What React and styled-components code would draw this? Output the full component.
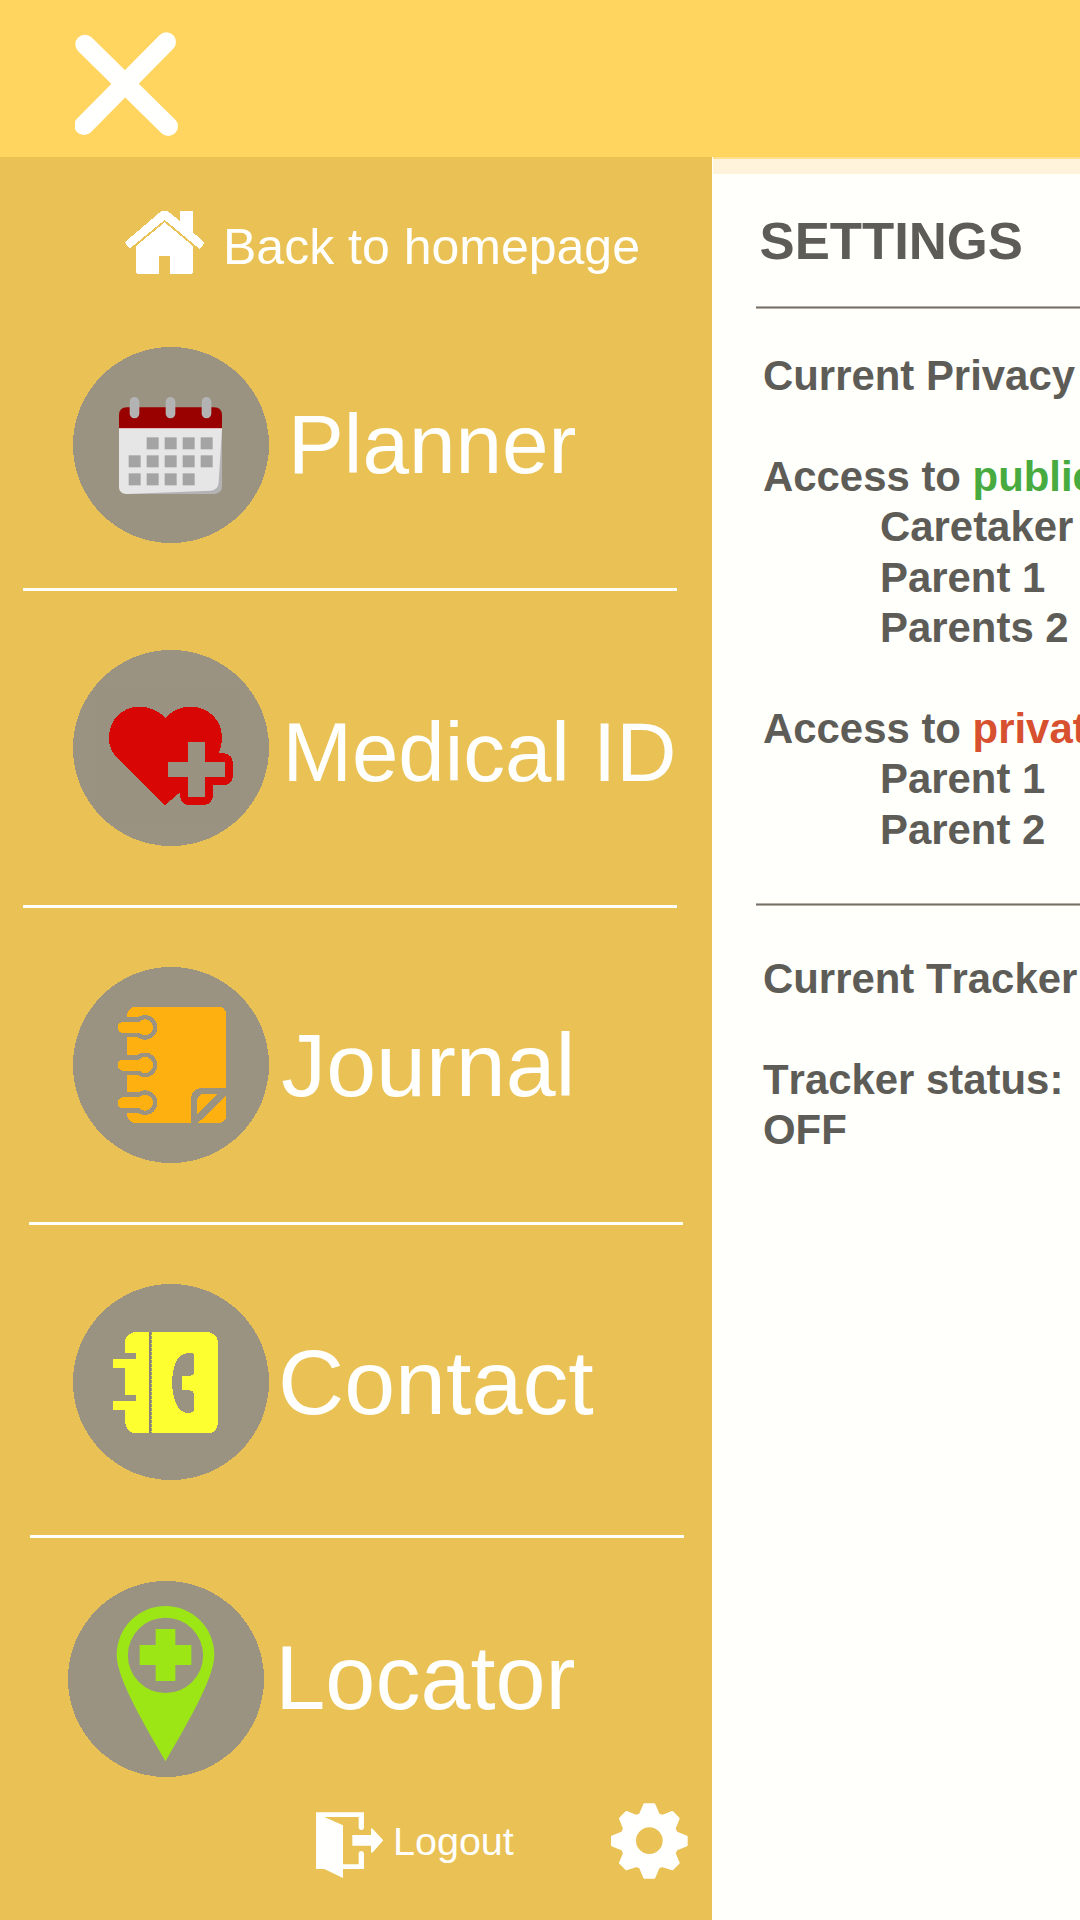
import React from "react";
import styled, { createGlobalStyle } from "styled-components";

const Global = createGlobalStyle`
  * { box-sizing: border-box; }
  body {
    margin: 0;
    background: #fffffc;
    font-family: "Liberation Sans", Arial, sans-serif;
    font-kerning: none;
  }
  h1, p, ul { margin: 0; padding: 0; font-weight: inherit; }
  button, a { all: unset; cursor: pointer; }
  svg { display: block; flex: none; }
`;

const Screen = styled.div`
  width: 1080px;
  height: 1920px;
  overflow: hidden;
  display: flex;
  flex-direction: column;
`;

const TopBar = styled.header`
  flex: none;
  height: 157px;
  padding: 32px 0 0 75px;
  background: #ffd45f;
`;

const CloseButton = styled.button`
  display: block;
  width: 104px;
  height: 105px;
`;

const Body = styled.div`
  flex: 1;
  display: flex;
  min-height: 0;
`;

const Sidebar = styled.nav`
  flex: none;
  width: 712px;
  padding-top: 53px;
  display: flex;
  flex-direction: column;
  background: #e9c154;
  color: #fffffd;
`;

const HomeLink = styled.a`
  display: flex;
  align-items: flex-start;
  height: 64px;
  padding-left: 125px;
  margin-bottom: 73px;
`;

const HomeLabel = styled.span`
  margin: 7px 0 0 19px;
  font-size: 50px;
  line-height: 60px;
  white-space: nowrap;
`;

const MenuItem = styled.a`
  display: flex;
  align-items: flex-start;
  height: 196px;
  padding-left: ${(p) => p.$left}px;
`;

const MenuLabel = styled.span`
  margin: ${(p) => p.$top}px 0 0 ${(p) => p.$gap}px;
  font-size: ${(p) => p.$size}px;
  line-height: 100px;
  white-space: nowrap;
`;

const Divider = styled.div`
  flex: none;
  width: 654px;
  height: 3px;
  margin: ${(p) => p.$above}px 0 ${(p) => p.$below}px ${(p) => p.$left}px;
  background: #fffffa;
`;

const Footer = styled.div`
  display: flex;
  align-items: flex-start;
  justify-content: space-between;
  margin-top: 26px;
  padding: 0 24px 0 316px;
`;

const LogoutLink = styled.a`
  display: flex;
  align-items: flex-start;
  padding-top: 9px;
`;

const LogoutLabel = styled.span`
  margin: 9px 0 0 9px;
  font-size: 39.5px;
  line-height: 40px;
`;

const Content = styled.main`
  flex: 1;
  min-width: 0;
  overflow: hidden;
  color: #5e5c57;
  font-weight: 700;
  white-space: nowrap;
`;

const Strip = styled.div`
  height: 17px;
  margin-left: 1px;
  border-top: 2px solid #ffdf8c;
  background: #fff4db;
`;

const Title = styled.h1`
  padding: 37px 0 0 47.5px;
  font-size: 52.7px;
  font-weight: 700;
  line-height: 60px;
`;

const Rule = styled.div`
  height: 3px;
  margin: ${(p) => p.$above}px 0 ${(p) => p.$below}px 44px;
  border: solid #b3afa7;
  border-width: 1px 0;
  background: #777069;
`;

const Section = styled.section`
  display: flex;
  flex-direction: column;
  gap: 50.4px;
  padding-left: 51px;
  font-size: 41.9px;
  line-height: 50.4px;
`;

const People = styled.ul`
  list-style: none;
  padding-left: 117px;
`;

const Level = styled.span`
  color: ${(p) => p.$color};
`;

const Disc = ({ y, x = 39, children }) => (
  <svg width="196" height="196" viewBox={`${x} ${y} 588 588`}>
    <circle cx={x + 294} cy={y + 294} r="294" fill="#9b9382" shapeRendering="crispEdges" />
    {children}
  </svg>
);

const CloseIcon = () => (
  <svg width="104" height="105" viewBox="225 96 312 315">
    <path d="M255 133L505 379M499 126L252 376" stroke="#fffffe" strokeWidth="58" strokeLinecap="round" />
  </svg>
);

const HomeIcon = () => (
  <svg width="79" height="64" viewBox="375 631 237 192" fill="#fff" shapeRendering="crispEdges">
    <path d="M375 727L482 636Q494 629 505 636L540 664V633H579V698L612 727Q612 739 598 747L494 661L389 747Q378 739 375 727Z" />
    <path d="M408 739L494 668L579 739V818Q579 822 574 822H510V768H477V822H412Q408 822 408 818Z" />
  </svg>
);

const cells = [
  [260, 322], [314, 322], [368, 322], [422, 322],
  [206, 376], [260, 376], [314, 376], [368, 376], [422, 376],
  [206, 430], [260, 430], [314, 430], [368, 430],
];

const PlannerIcon = () => (
  <Disc y={51}>
    <rect x="177" y="240" width="309" height="252" rx="22" fill="#b3b3b3" />
    <path d="M177 294H486L476 458Q474 480 452 482L200 492Q177 490 177 470Z" fill="#e6e6e6" />
    <path d="M177 294V256Q177 232 201 232H462Q486 232 486 256V294Z" fill="#990000" />
    <rect x="177" y="294" width="309" height="3" fill="#dfb9b9" />
    {cells.map(([cx, cy]) => (
      <rect key={`${cx}-${cy}`} x={cx} y={cy} width="36" height="36" fill="#a4a4a4" />
    ))}
    {[209, 317, 425].map((rx) => (
      <rect key={rx} x={rx} y="201" width="29" height="64" rx="14.5" fill="#b3b3b3" />
    ))}
  </Disc>
);

const MedicalIcon = () => (
  <Disc y={30}>
    <defs>
      <pattern id="hatch" width="12" height="12" patternUnits="userSpaceOnUse">
        <path d="M-2 14L14 -2" stroke="#8d8778" strokeWidth="2" />
      </pattern>
      <clipPath id="disc">
        <circle cx="333" cy="324" r="292" />
      </clipPath>
    </defs>
    <rect x="108" y="126" width="452" height="444" fill="url(#hatch)" opacity="0.4" clipPath="url(#disc)" />
    <path
      shapeRendering="crispEdges"
      fill="#d80706"
      fillRule="evenodd"
      d="M314 496L176 359C155 338 147 320 147 293C147 240 186 200 238 200C270 200 298 213 316 234C334 213 362 200 393 200C445 200 486 240 486 293C486 310 483 325 476 339H490Q517 343 519 368V410Q515 434 490 436H459V466Q457 492 434 495H385Q362 493 360 468V457ZM385 306V366H324V411H385V471H435V411H495V366H435V306Z"
    />
  </Disc>
);

const JournalIcon = () => (
  <Disc y={36}>
    <g shapeRendering="crispEdges" fill="#fdb00f">
      <path d="M221 155H480Q496 159 498 175V485Q496 500 482 503H221Q205 498 201 480V178Q205 162 221 155Z" />
      {[217, 330, 443].map((c) => (
        <g key={c}>
          <path d={`M198 ${c - 31}H237V${c + 30}H198Z`} fill="#9b9382" />
          <circle cx="255" cy={c} r="37" fill="#9b9382" />
          <path d={`M186 ${c - 16}H236V${c + 17}H186Q173 ${c + 13} 173 ${c}Q173 ${c - 13} 186 ${c - 16}Z`} />
          <circle cx="255" cy={c} r="24" />
        </g>
      ))}
      <path d="M498 399H422Q397 404 393 427V503H415L498 421Z" fill="#9b9382" />
      <path d="M411 480L474 416H432Q414 419 411 436Z" />
    </g>
  </Disc>
);

const ContactIcon = () => (
  <Disc y={42}>
    <g shapeRendering="crispEdges" fill="#fdff30">
      <path d="M230 185H440Q470 190 474 213V462Q468 487 450 489H220Q198 483 195 456V419H158V392H228V375H195V294H158V266H228V249H195V210Q203 188 230 185Z" />
      <path d="M267 185H273V489H267Z" fill="#8a8370" />
      <path d="M274.5 187V489" stroke="#9b9382" strokeWidth="3" strokeDasharray="9 3" />
      <path
        fill="#9b9382"
        d="M402 252V309Q400 317 390 317H366V361H390Q400 363 402 371V420Q398 429 380 429C350 425 339 385 336 342C338 285 350 252 384 249Q398 249 402 252Z"
      />
    </g>
  </Disc>
);

const LocatorIcon = () => (
  <Disc x={54} y={33}>
    <path
      fill="#9de616"
      fillRule="evenodd"
      d="M346.500 574C293 480 200 328 200 255A146.500 147 0 0 1 493 255C493 328 400 480 346.500 574ZM346.500 143A113 113 0 1 0 346.500 369A113 113 0 1 0 346.500 143Z"
    />
    <path fill="#9de616" d="M317 177H376V225H424V285H376V333H317V285H269V225H317Z" />
  </Disc>
);

const LogoutIcon = () => (
  <svg width="68" height="66" viewBox="78 96 204 198" fill="#fffffe">
    <path d="M78 97H222V143Q221 150 214 150Q207 150 206 143V111H103L159 136V294L103 267H78Z" />
    <path d="M159 253H206V220Q207 213 214 213Q221 213 222 220V267H159Z" />
    <path d="M187 165H243V148Q244 142 249 148L280 181L249 216Q244 221 243 216V197H187Z" />
  </svg>
);

const GearIcon = () => (
  <svg width="77" height="76" viewBox="963 70 231 228">
    <path
      fill="#fffffe"
      stroke="#fffffe"
      strokeWidth="6"
      strokeLinejoin="round"
      fillRule="evenodd"
      d="M1050 104L1063 74H1093L1106 104L1117 109L1147 97L1166 116L1154 147L1159 158L1190 171V197L1159 210L1154 221L1166 250L1147 269L1117 259L1106 263L1093 294H1063L1050 263L1039 259L1009 269L990 250L1002 221L997 210L966 197V171L997 158L1002 147L990 116L1009 97L1039 109ZM1078 140A43 43 0 1 0 1078 226A43 43 0 1 0 1078 140Z"
    />
  </svg>
);

const menu = [
  { label: "Planner", Icon: PlannerIcon, left: 73, top: 47, gap: 19, size: 83.7 },
  { label: "Medical ID", Icon: MedicalIcon, left: 73, top: 53, gap: 13.5, size: 83.4, line: { $above: 45, $below: 59, $left: 23 } },
  { label: "Journal", Icon: JournalIcon, left: 73, top: 48, gap: 12.3, size: 89.7, line: { $above: 59, $below: 59, $left: 23 } },
  { label: "Contact", Icon: ContactIcon, left: 73, top: 48, gap: 9, size: 91.6, line: { $above: 59, $below: 59, $left: 29 } },
  { label: "Locator", Icon: LocatorIcon, left: 68, top: 47, gap: 11.3, size: 90, line: { $above: 55, $below: 43, $left: 30 } },
];

export default function App() {
  return (
    <>
      <Global />
      <Screen>
        <TopBar>
          <CloseButton aria-label="Close">
            <CloseIcon />
          </CloseButton>
        </TopBar>
        <Body>
          <Sidebar>
            <HomeLink>
              <HomeIcon />
              <HomeLabel>Back to homepage</HomeLabel>
            </HomeLink>
            {menu.map(({ label, Icon, left, top, gap, size, line }) => (
              <React.Fragment key={label}>
                {line && <Divider {...line} />}
                <MenuItem $left={left}>
                  <Icon />
                  <MenuLabel $top={top} $gap={gap} $size={size}>{label}</MenuLabel>
                </MenuItem>
              </React.Fragment>
            ))}
            <Footer>
              <LogoutLink>
                <LogoutIcon />
                <LogoutLabel>Logout</LogoutLabel>
              </LogoutLink>
              <GearIcon />
            </Footer>
          </Sidebar>
          <Content>
            <Strip />
            <Title>SETTINGS</Title>
            <Rule $above={35} $below={42} />
            <Section>
              <p>Current Privacy</p>
              <div>
                <p>Access to <Level $color="#47ab40">public</Level></p>
                <People>
                  <li>Caretaker</li>
                  <li>Parent 1</li>
                  <li>Parents 2</li>
                </People>
              </div>
              <div>
                <p>Access to <Level $color="#d7502f">private</Level></p>
                <People>
                  <li>Parent 1</li>
                  <li>Parent 2</li>
                </People>
              </div>
            </Section>
            <Rule $above={48} $below={48} />
            <Section>
              <p>Current Tracker</p>
              <div>
                <p>Tracker status:</p>
                <p>OFF</p>
              </div>
            </Section>
          </Content>
        </Body>
      </Screen>
    </>
  );
}
